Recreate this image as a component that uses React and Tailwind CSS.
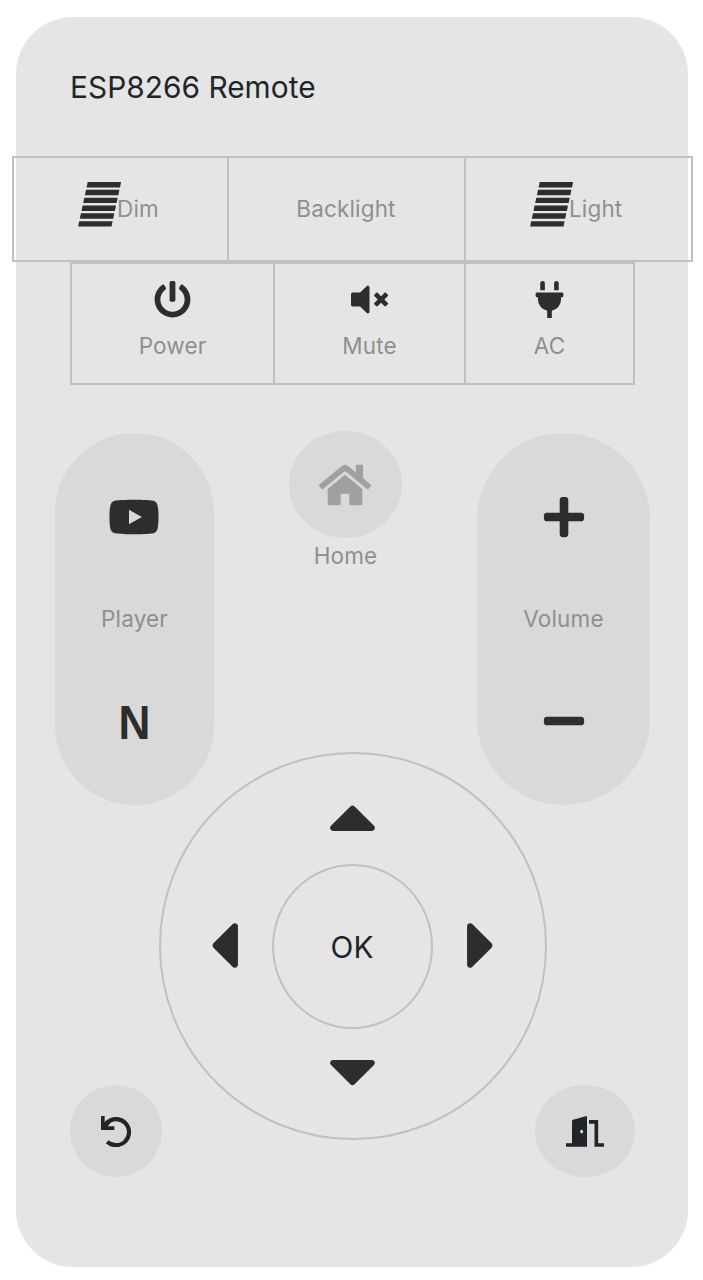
import React from "react";
import {
  FaPowerOff,
  FaVolumeMute,
  FaPlug,
  FaYoutube,
  FaHome,
  FaPlus,
  FaMinus,
  FaCaretUp,
  FaCaretDown,
  FaCaretLeft,
  FaCaretRight,
} from "react-icons/fa";

function Stripes() {
  return (
    <svg viewBox="0 0 42 45" className="h-[45px] w-[42px] shrink-0 overflow-visible" fill="#2d2d2d">
      {[0, 1, 2, 3, 4, 5].map((i) => {
        const y = i * 7.83;
        const x = 8.7 - i * 1.7;
        return <polygon key={i} points={`${x},${y} ${x + 33.4},${y} ${x + 32.3},${y + 5.4} ${x - 1.1},${y + 5.4}`} />;
      })}
    </svg>
  );
}

function BackIcon() {
  return (
    <svg viewBox="0 0 90 93" className="h-[31px] w-[30px]" fill="none">
      <path d="M17 21.5A39 39 0 1 1 18.5 77" stroke="currentColor" strokeWidth="12.5" />
      <path d="M0 0H11V19L17 13L28 22L20 31H40V42H0Z" fill="currentColor" />
    </svg>
  );
}

function ExitIcon() {
  return (
    <svg viewBox="0 0 114 92" className="h-[31px] w-[38px]" fill="none">
      <path fillRule="evenodd" d="M0 81H18V15Q18 12 21 11L59 0Q63 -1 63 3V92H0ZM47 41a4.5 5.5 0 1 0 .01 0Z" fill="currentColor" />
      <path d="M69 17H91V86.5H114" stroke="currentColor" strokeWidth="11" />
    </svg>
  );
}

function Label({ children }) {
  return <span className="whitespace-nowrap text-[22.5px] leading-[28px] tracking-[0.15px] text-[#8f8f8f]">{children}</span>;
}

function IconCell({ icon, label }) {
  return (
    <button className="flex flex-col items-center pt-[17px] text-[#2d2d2d]">
      <span className="flex h-[37px] items-center">{icon}</span>
      <span className="mt-[14px] flex"><Label>{label}</Label></span>
    </button>
  );
}

export default function App() {
  return (
    <main className="h-[1280px] w-[703px] overflow-hidden bg-white pl-4 pt-[17px] font-['Inter','Liberation_Sans',sans-serif]">
      <section className="flex h-[1250px] w-[672px] flex-col rounded-[57px] bg-[#e5e5e5]">
        <header className="flex h-[139px] shrink-0 items-center pl-[54px] pt-[2px]">
          <h1 className="whitespace-nowrap text-[29.8px] tracking-[0.05px] text-[#212529]">ESP8266 Remote</h1>
        </header>

        <div className="-ml-1 grid h-[106px] w-[681px] shrink-0 grid-cols-[213px_237px_1fr] border-2 border-[#c0c0c0]">
          <button className="flex items-center pl-[65px]">
            <span className="-mt-[10px] flex"><Stripes /></span>
            <span className="-ml-[4px] flex"><Label>Dim</Label></span>
          </button>
          <button className="flex items-center justify-center border-l-2 border-[#c0c0c0] pr-px"><Label>Backlight</Label></button>
          <button className="flex items-center border-l-2 border-[#c0c0c0] pl-[65px]">
            <span className="-mt-[10px] flex"><Stripes /></span>
            <span className="-ml-[4px] flex"><Label>Light</Label></span>
          </button>
        </div>

        <div className="ml-[54px] grid h-[123px] w-[565px] shrink-0 grid-cols-[203px_191px_1fr] divide-x-2 divide-[#c0c0c0] border-2 border-[#c0c0c0]">
          <IconCell icon={<FaPowerOff size={37} />} label="Power" />
          <IconCell icon={<FaVolumeMute size={37} />} label="Mute" />
          <IconCell icon={<FaPlug size={37} />} label="AC" />
        </div>

        <div className="mt-12 flex h-[372px] shrink-0 items-start justify-between pl-[39px] pr-[38px]">
          <div className="flex h-[372px] w-[159px] flex-col items-center rounded-full bg-[#d9d9d9] pt-[61px] text-[#2d2d2d]">
            <FaYoutube size={52} className="mr-[2px] h-[46px]" />
            <span className="mt-[65px] flex"><Label>Player</Label></span>
            <span className="mr-px mt-[62px] scale-x-[0.92] font-['Liberation_Sans',sans-serif] text-[48px] font-bold leading-[56px]">N</span>
          </div>
          <div className="-mt-[2px] flex w-[113px] flex-col items-center">
            <button className="flex h-[107px] w-[113px] items-center justify-center rounded-[50%] bg-[#d9d9d9] text-[#a0a0a0]">
              <FaHome size={52} className="mr-[2px]" />
            </button>
            <span className="mt-1 flex"><Label>Home</Label></span>
          </div>
          <div className="flex h-[372px] w-[173px] flex-col items-center justify-between rounded-full bg-[#d9d9d9] pb-[61px] pt-[61px] text-[#2d2d2d]">
            <FaPlus size={46} />
            <Label>Volume</Label>
            <FaMinus size={46} />
          </div>
        </div>

        <div className="-mt-[53px] ml-[142.5px] grid h-[388px] w-[388px] shrink-0 grid-cols-[111px_161px_112px] grid-rows-[110px_165px_109px] place-items-center rounded-full border-2 border-[#c0c0c0] text-[#2d2d2d]">
          <FaCaretUp size={77} className="col-start-2 row-start-1 mt-[14px]" />
          <FaCaretLeft size={77} className="col-start-1 row-start-2 -mt-[2px] ml-[14px]" />
          <button className="col-start-2 row-start-2 flex h-[165px] w-[161px] items-center justify-center rounded-[50%] border-2 border-[#c0c0c0] pt-px text-[29.8px] text-[#212529]">OK</button>
          <FaCaretRight size={77} className="col-start-3 row-start-2 -mt-[2px] mr-[15px]" />
          <FaCaretDown size={77} className="col-start-2 row-start-3 mb-[28px]" />
        </div>

        <footer className="-mt-[55px] flex shrink-0 items-center justify-between pl-[54px] pr-[53px] text-[#212529]">
          <button className="flex h-[92px] w-[92px] items-center justify-center rounded-full bg-[#d9d9d9]">
            <BackIcon />
          </button>
          <button className="flex h-[92px] w-[100px] items-center justify-center rounded-[50%] bg-[#d9d9d9]">
            <ExitIcon />
          </button>
        </footer>
      </section>
    </main>
  );
}
